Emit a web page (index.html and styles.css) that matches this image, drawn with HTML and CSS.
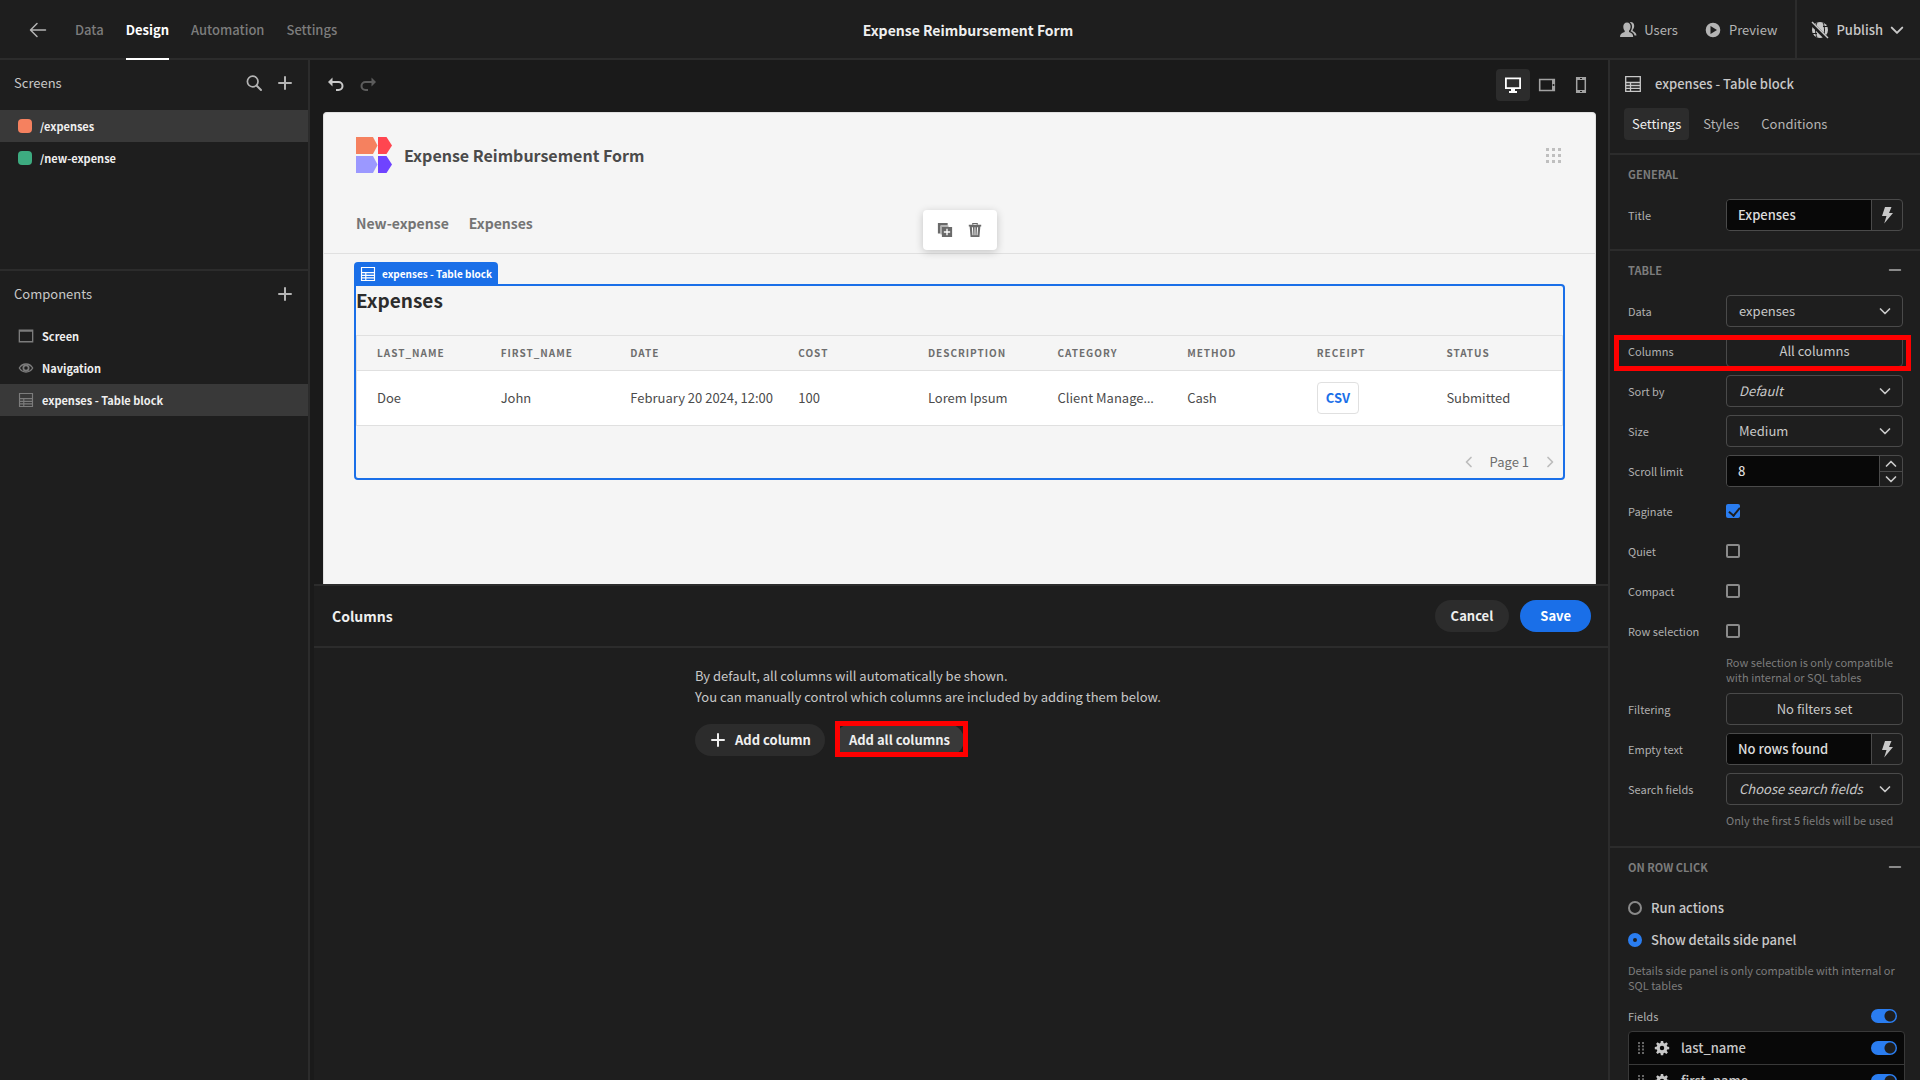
FILE: index.html
```html
<!DOCTYPE html>
<html lang="en">
<head>
<meta charset="utf-8">
<title>Expense Reimbursement Form</title>
<link rel="stylesheet" href="styles.css">
</head>
<body>
<svg class="sprite" aria-hidden="true">
  <symbol id="i-plus" viewBox="0 0 18 18"><path d="M9 3v12M3 9h12" fill="none" stroke="currentColor" stroke-width="2" stroke-linecap="round"/></symbol>
  <symbol id="i-minus" viewBox="0 0 18 18"><path d="M3 9h12" fill="none" stroke="currentColor" stroke-width="2" stroke-linecap="round"/></symbol>
  <symbol id="i-chevron" viewBox="0 0 12 12"><path d="M1.500 4L6 8.500L10.500 4" fill="none" stroke="currentColor" stroke-width="1.700" stroke-linecap="round" stroke-linejoin="round"/></symbol>
  <symbol id="i-table" viewBox="0 0 18 18"><path d="M1.700 1.700h14.600v14.600H1.700zM1.700 7.500h14.600M1.700 10.500h14.600M1.700 13.400h14.600M6.500 7.500v8.800" fill="none" stroke="currentColor" stroke-width="1.300"/></symbol>
  <symbol id="i-bolt" viewBox="0 0 18 18"><path d="M7 1h6.500L11 7h4L6.200 17.500 8.500 10H4z" fill="currentColor"/></symbol>
  <symbol id="i-gear" viewBox="0 0 18 18"><path fill="currentColor" fill-rule="evenodd" d="M7.700 1h2.600l.4 2.300 1.300.5 1.900-1.300 1.700 1.700-1.300 1.900.5 1.300 2.300.4v2.600l-2.300.4-.5 1.300 1.300 1.900-1.700 1.700-1.900-1.300-1.300.5-.4 2.300H7.700l-.4-2.300-1.300-.5-1.900 1.300-1.700-1.700 1.300-1.900-.5-1.300-2.300-.4V7.800l2.300-.4.5-1.300-1.300-1.900 1.700-1.700L6 3.800l1.300-.5zM9 6.600a2.500 2.500 0 1 0 0 5 2.500 2.500 0 0 0 0-5z"/></symbol>
  <symbol id="i-grip" viewBox="0 0 6 12"><path fill="currentColor" d="M0 0h2v2H0zM4 0h2v2H4zM0 3.300h2v2H0zM4 3.300h2v2H4zM0 6.600h2v2H0zM4 6.600h2v2H4zM0 10h2v2H0zM4 10h2v2H4z"/></symbol>
</svg>

<div class="app">
  <header class="topbar">
    <nav class="topbar-left">
      <button class="icon-btn back" aria-label="Back"><svg viewBox="0 0 18 18" width="18" height="18"><path d="M16.500 9H2M8 2.500L1.500 9 8 15.500" fill="none" stroke="currentColor" stroke-width="1.500" stroke-linecap="round" stroke-linejoin="round"/></svg></button>
      <a class="tab" href="#">Data</a>
      <a class="tab is-active" href="#">Design</a>
      <a class="tab" href="#">Automation</a>
      <a class="tab" href="#">Settings</a>
    </nav>
    <h1 class="app-name">Expense Reimbursement Form</h1>
    <div class="topbar-right">
      <button class="top-action"><svg viewBox="0 0 18 18" width="18" height="18"><path fill="currentColor" d="M8 1.500c2.300 0 3.600 1.700 3.600 4 0 1.800-.7 3.300-1.600 4.300v1.200c2.600.9 4.200 2 4.200 5H1c0-3 1.800-4.100 4.700-5V9.800C4.800 8.800 4.300 7.300 4.300 5.500c0-2.300 1.400-4 3.700-4z"/><path fill="currentColor" d="M11.500 1c2.300 0 3.700 1.500 3.700 3.800 0 1.700-.6 3-1.500 4v1.200c2 .8 3.700 2.300 3.800 4.500h-2c-.4-2-1.800-3.300-4-4.200 1-1.300 1.500-3 1.500-4.800 0-1.900-.8-3.500-2.300-4.300z"/></svg>Users</button>
      <button class="top-action"><svg viewBox="0 0 18 18" width="18" height="18"><path fill="currentColor" fill-rule="evenodd" d="M9 1.700a7.300 7.300 0 1 0 0 14.600A7.300 7.300 0 0 0 9 1.700zM6.500 5l6.500 4-6.500 4z"/></svg>Preview</button>
      <button class="publish"><svg viewBox="0 0 18 18" width="18" height="18"><circle cx="9" cy="9" r="8" fill="currentColor"/><path d="M6 1.500c-2 5-2 10 0 15M12 1.500c2 5 2 10 0 15M12 5.500h5M1 12.500h5" fill="none" stroke="#1e1e1e"/><path d="M0 2l16 16" stroke="#1e1e1e" stroke-width="4"/><path d="M1 1l16 16" stroke="currentColor" stroke-width="1.500"/></svg>Publish<svg width="14" height="14"><use href="#i-chevron"/></svg></button>
    </div>
  </header>

  <aside class="left">
    <section class="screens">
      <div class="panel-head"><h2>Screens</h2>
        <button class="icon-btn" aria-label="Search"><svg viewBox="0 0 18 18" width="18" height="18"><circle cx="7.700" cy="7.500" r="5.300" fill="none" stroke="currentColor" stroke-width="1.700"/><path d="M11.500 11.500l4.500 4.500" stroke="currentColor" stroke-width="2" stroke-linecap="round"/></svg></button>
        <button class="icon-btn" aria-label="Add screen"><svg width="18" height="18"><use href="#i-plus"/></svg></button>
      </div>
      <a class="tree-row is-selected" href="#"><span class="swatch swatch-orange"></span>/expenses</a>
      <a class="tree-row" href="#"><span class="swatch swatch-green"></span>/new-expense</a>
    </section>
    <section class="components">
      <div class="panel-head"><h2>Components</h2>
        <button class="icon-btn" aria-label="Add component"><svg width="18" height="18"><use href="#i-plus"/></svg></button>
      </div>
      <a class="tree-row component" href="#"><svg viewBox="0 0 18 18" width="16" height="16"><path d="M1.500 2.500h15v13h-15zM1.500 3.500h15" fill="none" stroke="currentColor" stroke-width="1.500"/></svg>Screen</a>
      <a class="tree-row component" href="#"><svg viewBox="0 0 18 18" width="16" height="16"><path d="M1.500 9C5 3 13 3 16.500 9 13 15 5 15 1.500 9z" fill="none" stroke="currentColor" stroke-width="1.500"/><circle cx="9" cy="9" r="3" fill="none" stroke="currentColor" stroke-width="2"/></svg>Navigation</a>
      <a class="tree-row component is-selected" href="#"><svg width="16" height="16"><use href="#i-table"/></svg>expenses - Table block</a>
    </section>
  </aside>

  <main class="workspace">
    <div class="canvas-tools">
      <button class="icon-btn undo" aria-label="Undo"><svg viewBox="0 0 18 18" width="18" height="18"><path d="M3 6h8.500a4 4 0 0 1 0 8H9" fill="none" stroke="currentColor" stroke-width="2"/><path d="M5.500 1.500v9L1 6z" fill="currentColor"/></svg></button>
      <button class="icon-btn redo" aria-label="Redo"><svg viewBox="0 0 18 18" width="18" height="18"><path d="M15 6H6.500a4 4 0 0 0 0 8H9" fill="none" stroke="currentColor" stroke-width="2"/><path d="M12.500 1.500v9L17 6z" fill="currentColor"/></svg></button>
      <div class="devices">
        <button class="device is-active" aria-label="Desktop"><svg viewBox="0 0 18 18" width="18" height="18"><path d="M1.900 2.400h14.200v9.700H1.900z" fill="none" stroke="currentColor" stroke-width="1.800"/><path d="M7 12h4v3h2v2H5v-2h2z" fill="currentColor"/></svg></button>
        <button class="device" aria-label="Tablet"><svg viewBox="0 0 18 18" width="18" height="18"><path d="M1.700 3.500h14.600v11H1.700z" fill="none" stroke="currentColor" stroke-width="1.600"/><path d="M14 3h3v12h-3z" fill="currentColor"/><circle cx="15.500" cy="9" r="1" fill="#1a1a1a"/></svg></button>
        <button class="device" aria-label="Mobile"><svg viewBox="0 0 18 18" width="18" height="18"><path d="M4.700 1.700h8.600v14.600H4.700z" fill="none" stroke="currentColor" stroke-width="1.500"/><path d="M4 1h10v3H4zM4 14h10v3H4z" fill="currentColor"/><path d="M8 15.500h2M8 2.500h2" stroke="#1a1a1a"/></svg></button>
      </div>
    </div>

    <div class="preview">
      <div class="preview-head">
        <svg class="logo" viewBox="0 0 36 36" width="36" height="36"><path fill="#f5815f" d="M0 0h17l4.500 8.500L17 17H0z"/><path fill="#ff4650" d="M22 0h8.500L36 8.500 30.500 17H22z"/><path fill="#9b98ff" d="M0 19h17l4.500 8.500L17 36H0z"/><path fill="#6f43ff" d="M22 19h8.500L36 27.500 30.500 36H22z"/></svg>
        <h2 class="preview-title">Expense Reimbursement Form</h2>
        <button class="icon-btn apps" aria-label="Apps"><svg viewBox="0 0 15 15" width="15" height="15"><path fill="currentColor" d="M0 0h3v3H0zM6 0h3v3H6zM12 0h3v3h-3zM0 6h3v3H0zM6 6h3v3H6zM12 6h3v3h-3zM0 12h3v3H0zM6 12h3v3H6zM12 12h3v3h-3z"/></svg></button>
      </div>
      <nav class="preview-nav"><a href="#">New-expense</a><a href="#">Expenses</a>
        <div class="float-tools">
          <button class="icon-btn" aria-label="Duplicate"><svg viewBox="0 0 18 18" width="16" height="16"><path fill="currentColor" d="M1 1h11v3H4v9H1z"/><path fill="#b3b3b3" d="M4 4h9v2H6v8H4z"/><path fill="currentColor" fill-rule="evenodd" d="M5.500 5.500H17V17H5.500zM10.500 7.700v2.800H7.700v1.500h2.800v2.800H12V12h2.800v-1.500H12V7.700z"/></svg></button>
          <button class="icon-btn" aria-label="Delete"><svg viewBox="0 0 18 18" width="16" height="16"><path d="M6.500 3V1.700h5V3" fill="none" stroke="currentColor" stroke-width="1.300"/><path fill="currentColor" fill-rule="evenodd" d="M2 3h14v2h-1l-1 12H4L3 5H2zM5.500 6l.7 9h1L6.700 6zM8.500 6v9h1V6zM11.300 6l-.5 9h1l.7-9z"/></svg></button>
        </div>
      </nav>
      <section class="block">
        <span class="block-tag"><svg width="16" height="16"><use href="#i-table"/></svg>expenses - Table block</span>
        <h3 class="block-title">Expenses</h3>
        <table class="data">
          <colgroup><col><col><col class="col-date"><col><col><col><col><col><col></colgroup>
          <thead><tr><th>LAST_NAME</th><th>FIRST_NAME</th><th>DATE</th><th>COST</th><th>DESCRIPTION</th><th>CATEGORY</th><th>METHOD</th><th>RECEIPT</th><th>STATUS</th></tr></thead>
          <tbody><tr><td>Doe</td><td>John</td><td>February 20 2024, 12:00</td><td>100</td><td>Lorem Ipsum</td><td>Client Manage<span class="ellipsis">…</span></td><td>Cash</td><td><a class="file" href="#">CSV</a></td><td>Submitted</td></tr></tbody>
        </table>
        <div class="pager">
          <button class="icon-btn" aria-label="Previous page"><svg class="turn-left" width="12" height="12"><use href="#i-chevron"/></svg></button>
          <span>Page 1</span>
          <button class="icon-btn" aria-label="Next page"><svg class="turn-right" width="12" height="12"><use href="#i-chevron"/></svg></button>
        </div>
      </section>
    </div>

    <section class="drawer">
      <header class="drawer-head"><h2>Columns</h2><button class="pill">Cancel</button><button class="pill pill-cta">Save</button></header>
      <div class="drawer-body">
        <p>By default, all columns will automatically be shown.<br>You can manually control which columns are included by adding them below.</p>
        <div class="drawer-actions">
          <button class="pill pill-tight"><svg width="18" height="18"><use href="#i-plus"/></svg>Add column</button>
          <div class="marked"><button class="pill pill-tight pill-hover">Add all columns</button><span class="mark mark-button"></span></div>
        </div>
      </div>
    </section>
  </main>

  <aside class="right">
    <div class="inspector-head">
      <div class="inspector-title"><svg width="18" height="18"><use href="#i-table"/></svg><h2>expenses - Table block</h2></div>
      <div class="inspector-tabs"><button class="is-active">Settings</button><button>Styles</button><button>Conditions</button></div>
    </div>

    <section class="group">
      <div class="group-head"><h3>GENERAL</h3></div>
      <div class="fields">
        <label for="f-title">Title</label>
        <div class="combo"><input id="f-title" type="text" value="Expenses"><button aria-label="Bind title"><svg width="18" height="18"><use href="#i-bolt"/></svg></button></div>
      </div>
    </section>

    <section class="group">
      <div class="group-head"><h3>TABLE</h3><button class="icon-btn" aria-label="Collapse"><svg width="16" height="16"><use href="#i-minus"/></svg></button></div>
      <div class="fields">
        <label for="f-data">Data</label>
        <div class="picker"><select id="f-data"><option>expenses</option></select><svg width="12" height="12"><use href="#i-chevron"/></svg></div>
        <div class="field-row">
          <label for="f-columns">Columns</label>
          <button id="f-columns" class="action">All columns</button>
          <span class="mark mark-row"></span>
        </div>
        <label for="f-sort">Sort by</label>
        <div class="picker is-placeholder"><select id="f-sort"><option>Default</option></select><svg width="12" height="12"><use href="#i-chevron"/></svg></div>
        <label for="f-size">Size</label>
        <div class="picker"><select id="f-size"><option>Medium</option></select><svg width="12" height="12"><use href="#i-chevron"/></svg></div>
        <label for="f-limit">Scroll limit</label>
        <div class="combo"><input id="f-limit" type="text" inputmode="numeric" value="8">
          <div class="stepper"><button aria-label="Increase"><svg class="turn-up" width="12" height="12"><use href="#i-chevron"/></svg></button><button aria-label="Decrease"><svg width="12" height="12"><use href="#i-chevron"/></svg></button></div></div>
        <label for="f-paginate">Paginate</label><input id="f-paginate" class="check" type="checkbox" checked>
        <label for="f-quiet">Quiet</label><input id="f-quiet" class="check" type="checkbox">
        <label for="f-compact">Compact</label><input id="f-compact" class="check" type="checkbox">
        <label for="f-rows">Row selection</label><input id="f-rows" class="check" type="checkbox">
        <p class="hint">Row selection is only compatible with internal or SQL tables</p>
        <label for="f-filter">Filtering</label><button id="f-filter" class="action">No filters set</button>
        <label for="f-empty">Empty text</label>
        <div class="combo"><input id="f-empty" type="text" value="No rows found"><button aria-label="Bind empty text"><svg width="18" height="18"><use href="#i-bolt"/></svg></button></div>
        <label for="f-search">Search fields</label>
        <div class="picker is-placeholder"><select id="f-search"><option>Choose search fields</option></select><svg width="12" height="12"><use href="#i-chevron"/></svg></div>
        <p class="hint">Only the first 5 fields will be used</p>
      </div>
    </section>

    <section class="group">
      <div class="group-head"><h3>ON ROW CLICK</h3><button class="icon-btn" aria-label="Collapse"><svg width="16" height="16"><use href="#i-minus"/></svg></button></div>
      <div class="radios">
        <label><input type="radio" name="click">Run actions</label>
        <label><input type="radio" name="click" checked>Show details side panel</label>
      </div>
      <p class="note">Details side panel is only compatible with internal or SQL tables</p>
      <div class="all-fields"><label for="f-all">Fields</label><input id="f-all" class="switch" type="checkbox" checked></div>
      <ul class="field-list">
        <li><svg class="grip" width="6" height="12"><use href="#i-grip"/></svg><svg width="16" height="16"><use href="#i-gear"/></svg><label for="f-last">last_name</label><input id="f-last" class="switch" type="checkbox" checked></li>
        <li><svg class="grip" width="6" height="12"><use href="#i-grip"/></svg><svg width="16" height="16"><use href="#i-gear"/></svg><label for="f-first">first_name</label><input id="f-first" class="switch" type="checkbox" checked></li>
      </ul>
    </section>
  </aside>
</div>
</body>
</html>
```
FILE: styles.css
```css
:root {
  --bg: #1a1a1a;
  --panel: #1e1e1e;
  --line: #2c2c2c;
  --hover: #393939;
  --field: #080808;
  --outline: #4a4a4a;
  --text: #c8c8c8;
  --strong: #efefef;
  --muted: #a2a2a2;
  --dim: #7c7c7c;
  --blue: #1a6fe8;
  --blue-bright: #2a7df0;
  --mark: #ff0000;
}

* { box-sizing: border-box; }

body {
  margin: 0;
  background: var(--bg);
  color: var(--text);
  font-family: "Noto Sans CJK SC", "Noto Sans", sans-serif;
  font-size: 13px;
  line-height: 20px;
}

h1, h2, h3, p, ul { margin: 0; padding: 0; }
h1, h2, h3 { font-size: 13px; font-weight: 400; }
button, input, select { font: inherit; color: inherit; margin: 0; }
button { padding: 0; border: 0; background: none; cursor: pointer; }
a { color: inherit; text-decoration: none; }
svg { display: block; flex: none; }
.sprite { position: absolute; width: 0; height: 0; }
.icon-btn { display: flex; align-items: center; justify-content: center; }
.turn-left { transform: rotate(90deg); }
.turn-right { transform: rotate(-90deg); }
.turn-up { transform: rotate(180deg); }

.app {
  display: grid;
  grid-template: 60px minmax(0, 1fr) / 310px minmax(0, 1fr) 312px;
  height: 100vh;
  overflow: hidden;
}

/* Top bar */
.topbar {
  grid-column: 1 / -1;
  display: grid;
  grid-template-columns: 1fr auto 1fr;
  padding-left: 16px;
  border-bottom: 2px solid var(--line);
  background: var(--panel);
}
.topbar-left { display: flex; gap: 22px; padding-left: 13px; }
.back { margin-right: 6px; color: #b4b4b4; }
.tab { display: flex; align-items: center; height: 60px; color: var(--dim); font-weight: 500; border-bottom: 2px solid transparent; border-top: 2px solid transparent; }
.tab.is-active { color: #fff; font-weight: 700; border-bottom-color: #fff; }
.app-name { align-self: center; font-size: 14px; font-weight: 700; color: var(--strong); }
.topbar-right { display: flex; justify-content: flex-end; }
.top-action { display: flex; align-items: center; gap: 7px; margin-right: 26px; color: #b4b4b4; }
.top-action:nth-child(2) { margin-right: 18px; }
.publish { display: flex; align-items: center; gap: 7px; padding: 0 16px 0 14px; border-left: 2px solid var(--line); font-weight: 500; }

/* Left panel */
.left { display: flex; flex-direction: column; border-right: 2px solid var(--line); background: var(--panel); }
.screens { height: 211px; border-bottom: 2px solid var(--line); }
.panel-head { display: flex; align-items: center; gap: 13px; height: 50px; padding: 0 14px 4px; color: #b4b4b4; }
.panel-head h2 { flex: 1; color: var(--text); }
.components .panel-head { height: 49px; }
.tree-row { display: flex; align-items: center; gap: 8px; height: 32px; padding: 0 18px; color: var(--strong); font-size: 11px; font-weight: 700; }
.component svg { color: var(--dim); }
.is-selected { background: var(--hover); }
.swatch { width: 14px; height: 14px; border-radius: 4px; }
.swatch-orange { background: #f5815f; }
.swatch-green { background: #3dab80; }

/* Workspace */
.workspace { display: flex; flex-direction: column; min-width: 0; }
.canvas-tools { display: flex; align-items: center; gap: 14px; height: 52px; padding: 0 10px 3px 17px; }
.undo { color: var(--text); }
.redo { color: #5c5c5c; }
.devices { display: flex; margin-left: auto; }
.device { display: flex; align-items: center; justify-content: center; width: 34px; height: 32px; border-radius: 4px; color: var(--muted); }
.device.is-active { background: var(--line); color: #fff; }

.preview { flex: 1 1 472px; min-height: 0; margin: 0 12px 0 13px; overflow: hidden; border: 1px solid #e0e0e0; border-bottom: 0; border-radius: 4px 4px 0 0; background: #f5f5f5; color: #4b4b4b; }
.preview-head { display: flex; align-items: center; gap: 12px; padding: 24px 34px 0 32px; }
.preview-title { flex: 1; font-size: 16px; font-weight: 600; line-height: 34px; color: #4b4b4b; }
.apps { color: #bfbfbf; }
.preview-nav { position: relative; display: flex; gap: 20px; height: 81px; padding: 40px 32px 0; border-bottom: 1px solid #e0e0e0; font-size: 14px; font-weight: 600; color: #747474; }
.float-tools { position: absolute; left: 50%; top: 37px; display: flex; align-items: center; justify-content: center; gap: 14px; width: 74px; height: 40px; margin-left: -37px; border-radius: 4px; background: #fff; color: #6a6a6a; box-shadow: 0 2px 8px rgba(0, 0, 0, 0.2); }

.block { position: relative; margin: 30px 30px 0; border: 2px solid var(--blue); border-radius: 0 4px 4px 4px; }
.block-tag { position: absolute; left: -2px; bottom: 100%; display: flex; align-items: center; gap: 6px; height: 24px; padding: 0 6px; border-radius: 4px 4px 0 0; background: var(--blue); color: #fff; font-size: 11px; font-weight: 700; white-space: nowrap; }
.block-tag { font-size: 10px; }
.block-title { font-size: 19px; font-weight: 600; line-height: 28px; color: #2c2c2c; }
.data { width: 100%; margin-top: 21px; table-layout: fixed; border-collapse: separate; border-spacing: 0; border: 1px solid #e0e0e0; }
.col-date { width: 168px; }
.data th, .data td { padding: 0 14px; text-align: left; white-space: nowrap; }
.data th:first-child, .data td:first-child { padding-left: 20px; }
.data th { height: 35px; border-bottom: 1px solid #e0e0e0; font-size: 10px; font-weight: 700; letter-spacing: 1px; color: #6e6e6e; }
.data td { height: 54px; background: #fff; color: #4b4b4b; }
.ellipsis { font-family: "Noto Sans", sans-serif; }
.file { display: inline-flex; align-items: center; height: 32px; padding: 0 8px; border: 1px solid #e0e0e0; border-radius: 4px; color: var(--blue); font-weight: 700; }
.pager { display: flex; align-items: center; justify-content: flex-end; gap: 15px; padding: 26px 7px 6px; color: #6e6e6e; }
.pager .icon-btn { color: #bcbcbc; }

/* Drawer */
.drawer { flex: 1 1 496px; min-height: 0; margin-left: 4px; background: var(--panel); border-top: 2px solid var(--line); }
.drawer-head { display: flex; align-items: center; gap: 11px; height: 62px; padding: 0 17px 0 18px; border-bottom: 2px solid var(--line); }
.drawer-head h2 { flex: 1; font-size: 14px; font-weight: 700; color: var(--strong); }
.pill { display: flex; align-items: center; gap: 8px; height: 32px; padding: 0 16px; border-radius: 16px; background: var(--line); color: var(--strong); font-weight: 700; }
.pill-cta { padding: 0 20px; background: var(--blue); color: #fff; }
.pill-tight { padding: 0 14px; }
.pill-hover { background: var(--hover); }
.drawer-body { max-width: 532px; margin: 0 auto; padding-top: 17px; }
.drawer-body p { line-height: 21px; }
.drawer-actions { display: flex; gap: 10px; margin-top: 17px; }
.marked, .field-row { position: relative; }
.mark { position: absolute; border: 5px solid var(--mark); pointer-events: none; }
.mark-button { inset: -3px -4px -1px 0; }
.mark-row { inset: 0 -8px -4px -14px; }

/* Inspector */
.right { overflow: hidden; border-left: 2px solid var(--line); background: var(--panel); }
.inspector-head { padding: 14px 14px 13px; }
.inspector-title { display: flex; align-items: center; gap: 13px; height: 20px; }
.inspector-title h2 { font-weight: 500; }
.inspector-tabs { display: flex; gap: 6px; margin-top: 14px; }
.inspector-tabs button { height: 32px; padding: 0 8px; border-radius: 4px; color: #b4b4b4; }
.inspector-tabs .is-active { background: var(--line); color: var(--strong); }
.group { padding: 8px 17px 18px 18px; border-top: 2px solid var(--line); }
.group-head { display: flex; align-items: center; justify-content: space-between; height: 22px; color: #8a8a8a; }
.group-head h3 { font-size: 11px; font-weight: 600; color: var(--dim); }
.fields { display: grid; grid-template-columns: 98px minmax(0, 1fr); gap: 8px 0; align-items: center; margin-top: 14px; }
.fields label, .all-fields label { font-size: 11px; color: #b0b0b0; }
.fields label { line-height: 32px; }
.field-row { grid-column: 1 / -1; display: grid; grid-template-columns: subgrid; align-items: center; }
.combo { display: flex; height: 32px; border: 1px solid var(--outline); border-radius: 4px; overflow: hidden; }
.combo input { flex: 1; min-width: 0; padding: 0 11px; border: 0; background: var(--field); color: #dcdcdc; outline: 0; font-weight: 500; }
.combo > button { display: flex; align-items: center; justify-content: center; width: 31px; border-left: 1px solid var(--outline); }
.stepper { display: grid; grid-template-rows: 1fr 1fr; width: 23px; border-left: 1px solid var(--outline); }
.stepper button { display: flex; align-items: center; justify-content: center; }
.stepper button + button { border-top: 1px solid var(--outline); }
.picker { position: relative; }
.picker select { display: block; width: 100%; height: 32px; padding: 0 12px; appearance: none; border: 1px solid var(--outline); border-radius: 4px; background: var(--panel); }
.picker.is-placeholder select { font-style: italic; }
.picker svg { position: absolute; right: 12px; top: 10px; pointer-events: none; }
.action { height: 32px; border: 1px solid var(--outline); border-radius: 4px; }
.check { width: 14px; height: 14px; appearance: none; border: 2px solid #8a8a8a; border-radius: 2px; }
.check:checked { border-color: var(--blue-bright); background: var(--blue-bright); }
.check:checked::after { content: ""; display: block; width: 5px; height: 9px; margin: -1px 0 0 3px; border: solid var(--panel); border-width: 0 2px 2px 0; transform: rotate(40deg); }
.hint { grid-column: 2; color: var(--dim); font-size: 11px; line-height: 15px; }
.radios { margin-top: 14px; }
.radios label { display: flex; align-items: center; gap: 9px; height: 32px; font-weight: 500; }
.radios input { width: 14px; height: 14px; appearance: none; border: 2px solid #8a8a8a; border-radius: 50%; }
.radios input:checked { border: 5px solid var(--blue-bright); }
.note { margin-top: 7px; color: var(--dim); font-size: 11px; line-height: 15px; }
.all-fields { display: flex; align-items: center; justify-content: space-between; margin-top: 13px; padding-right: 6px; }
.switch { width: 26px; height: 14px; appearance: none; border-radius: 7px; background: radial-gradient(circle at 19px 7px, var(--panel) 5px, var(--blue-bright) 6px); }
.field-list { margin: 5px -2px 0 0; list-style: none; border: 1px solid var(--hover); border-radius: 4px 4px 0 0; background: var(--field); }
.field-list li { display: flex; align-items: center; height: 33px; padding: 0 7px 0 9px; border-bottom: 1px solid var(--hover); }
.field-list .grip { margin-right: 10px; color: #666; }
.field-list label { flex: 1; margin-left: 11px; font-weight: 500; }
```
